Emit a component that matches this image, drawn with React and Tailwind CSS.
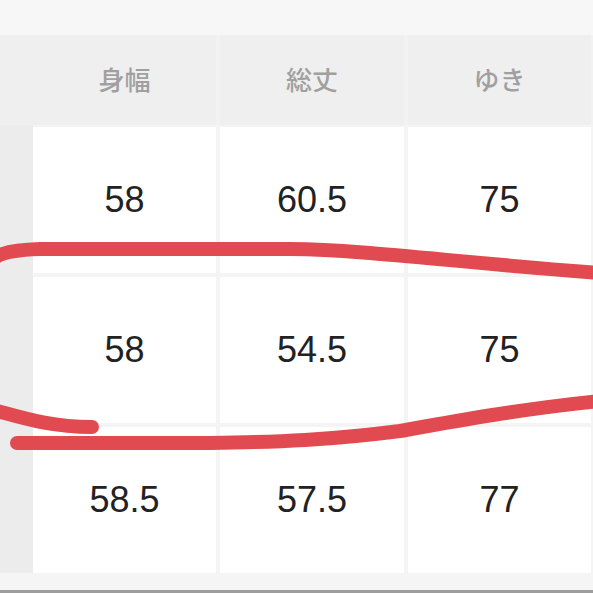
import React from "react";

const headers = ["身幅", "総丈", "ゆき"];
const rows = [
  ["58", "60.5", "75"],
  ["58", "54.5", "75"],
  ["58.5", "57.5", "77"],
];

export default function App() {
  return (
    <div className="relative w-[593px] h-[593px] overflow-hidden bg-[#f4f4f4]" style={{ fontFamily: '"Liberation Sans", Arial, sans-serif' }}>
      <div className="h-[35px] bg-[#f7f7f7]" />
      <div className="flex h-[90px] bg-[#efefef]">
        <div className="w-[33px] shrink-0" />
        {headers.map((h, i) => (
          <div key={h} className="flex shrink-0">
            <div
              className={`${i === 1 ? "w-[184px]" : "w-[183px]"} flex items-center justify-center pb-[4px] text-[26px] font-medium text-[#a0a0a0]`}
              style={{ fontFamily: '"Noto Sans CJK JP", "Noto Sans", sans-serif' }}
            >
              {h}
            </div>
            <div className="w-[4px] bg-[#f2f2f2]" />
          </div>
        ))}
      </div>
      <div className="flex">
        <div className="w-[33px] shrink-0 bg-[#ececec] h-[448px]" />
        <div className="grid grid-cols-[183px_184px_183px_183px] gap-[4px] pt-[2px]">
          {rows.map((r, ri) => (
            <React.Fragment key={ri}>
              {r.map((v, ci) => (
                <div key={ci} className="h-[146px] bg-white flex items-center justify-center text-[36px] text-[#222222]">
                  {v}
                </div>
              ))}
              <div className="h-[146px] bg-white" />
            </React.Fragment>
          ))}
        </div>
      </div>
      <div className="h-[17px] bg-[#f5f5f5]" />
      <div className="h-[3px] bg-[#9d9d9d]" />

      <svg className="absolute inset-0 pointer-events-none" width="593" height="593" viewBox="0 0 593 593">
        <g fill="none" stroke="#e14a50" strokeWidth="14" strokeLinecap="round" strokeLinejoin="round">
          <path d="M -4 257 Q 6 250 40 249 L 290 249 C 370 250 450 262 600 273" />
          <path d="M -6 410 C 20 417 50 427 92 427" />
          <path d="M 17 443 L 210 443 C 280 442 330 440 400 431 C 450 422 520 409 600 401" />
        </g>
      </svg>
    </div>
  );
}
